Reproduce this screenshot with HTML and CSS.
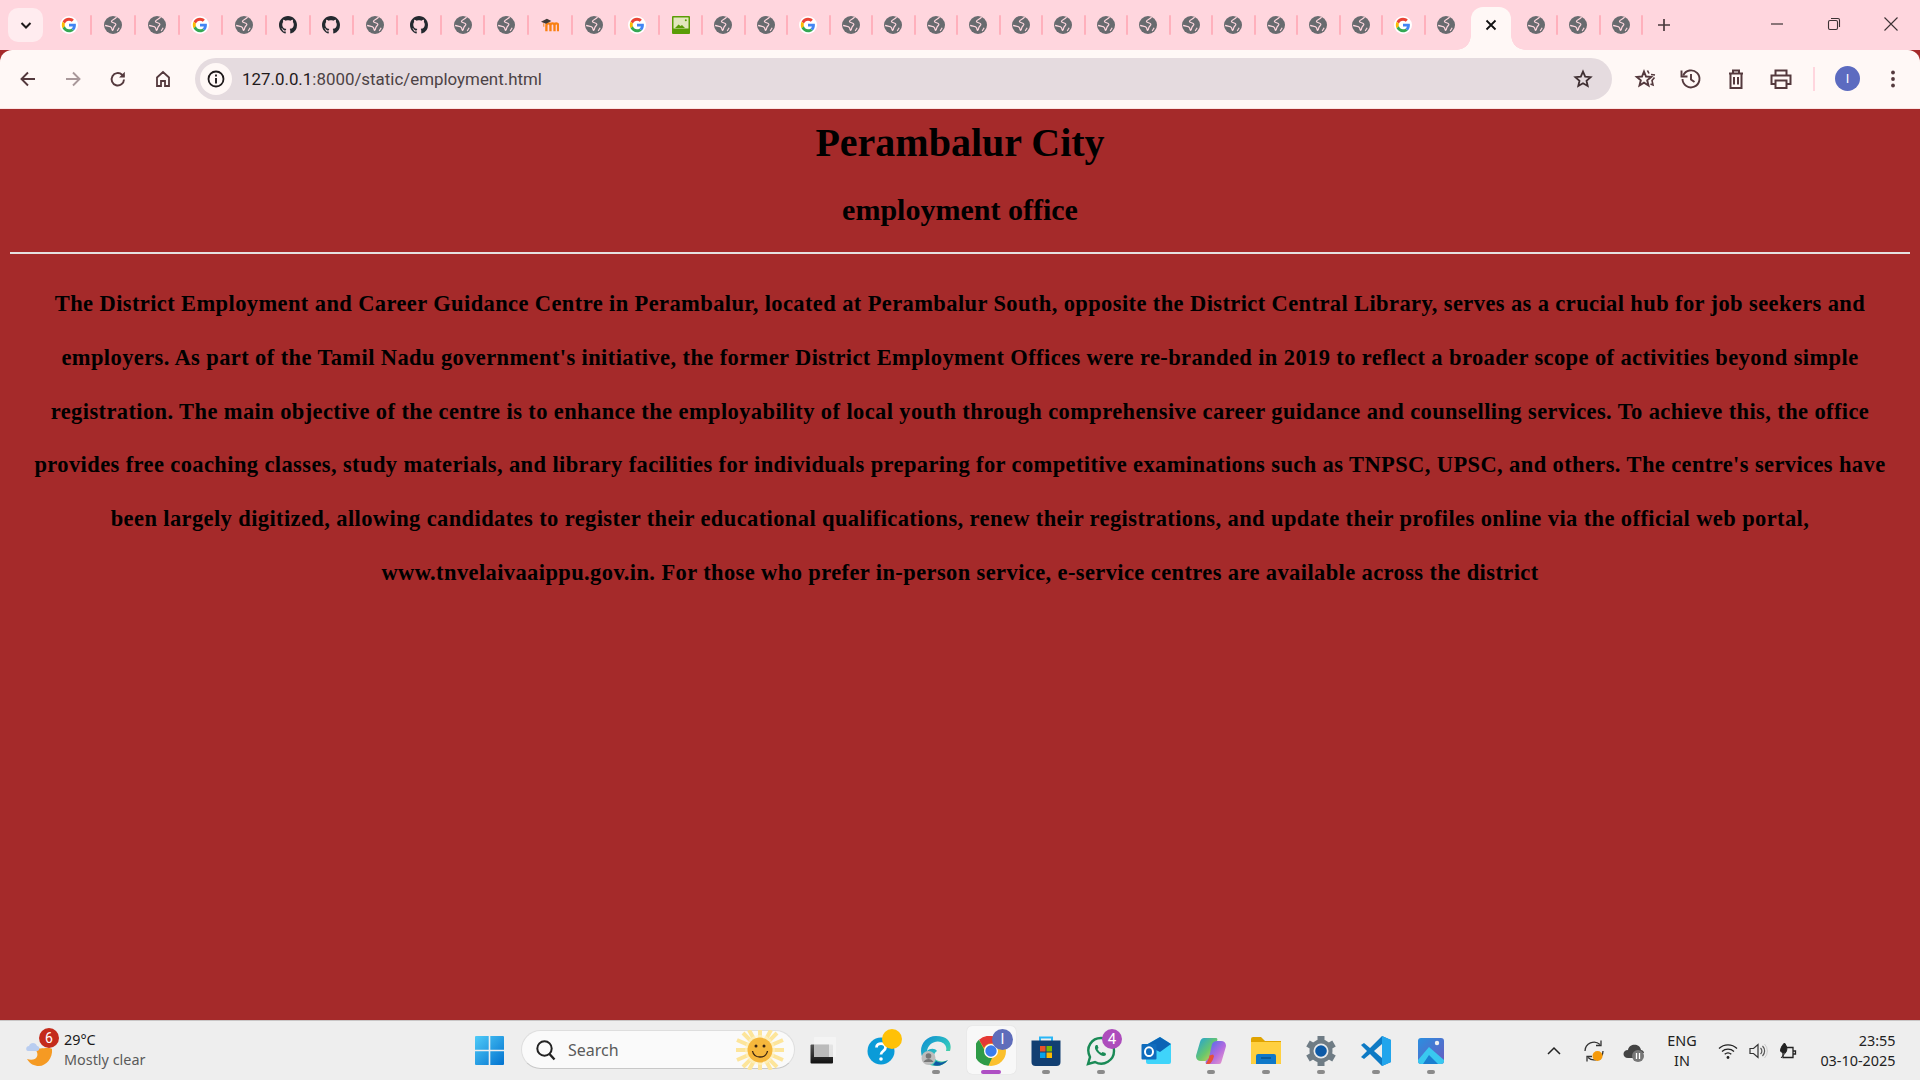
FILE: index.html
```html
<!DOCTYPE html>
<html lang="en">
<head>
<meta charset="utf-8">
<title>employment office</title>
<link rel="stylesheet" href="styles.css">
</head>
<body>
<svg class="defs" aria-hidden="true">
  <symbol id="globe" viewBox="0 0 16 16">
    <circle cx="8" cy="8" r="8" fill="#686b6f"/>
    <path d="M11.2 1C9.500 3.200 6.800 3.200 6.600 4.800c-.1 1.400 3.400 1 3.900 2.400.4 1.100-1.500 1.600-1.800 3.200-.2 1-.4 2.200-1 2.400-.5 0-.6-1.400-1-2.300C6 9 3.500 9.300 1 8.400" fill="none" stroke="#ffd6de" stroke-width="1.100"/>
    <path d="M13.500 10.500l-1.800 2.800" fill="none" stroke="#ffd6de" stroke-width="1"/>
  </symbol>
  <symbol id="google" viewBox="-6 -6 60 60">
    <circle cx="24" cy="24" r="30" fill="#fff"/>
    <path fill="#EA4335" d="M24 9.500c3.540 0 6.710 1.220 9.210 3.600l6.850-6.850C35.900 2.380 30.470 0 24 0 14.620 0 6.510 5.380 2.560 13.220l7.980 6.190C12.430 13.720 17.740 9.500 24 9.500z"/>
    <path fill="#4285F4" d="M46.980 24.550c0-1.570-.15-3.090-.38-4.550H24v9.020h12.940c-.58 2.960-2.260 5.480-4.780 7.180l7.730 6c4.510-4.180 7.090-10.360 7.090-17.650z"/>
    <path fill="#FBBC05" d="M10.530 28.590c-.5-1.450-.78-2.990-.78-4.590s.27-3.140.78-4.590l-7.980-6.190C.92 16.460 0 20.120 0 24c0 3.880.92 7.540 2.560 10.780l7.970-6.190z"/>
    <path fill="#34A853" d="M24 48c6.480 0 11.930-2.130 15.890-5.810l-7.730-6c-2.150 1.450-4.920 2.300-8.160 2.300-6.260 0-11.570-4.220-13.470-9.910l-7.980 6.190C6.510 42.620 14.620 48 24 48z"/>
  </symbol>
  <symbol id="github" viewBox="0 0 16 16">
    <path fill="#24292f" d="M8 0C3.580 0 0 3.580 0 8c0 3.540 2.290 6.530 5.470 7.590.4.07.55-.17.55-.38 0-.19-.01-.82-.01-1.490-2.010.37-2.530-.49-2.690-.94-.09-.23-.48-.94-.82-1.130-.28-.15-.68-.52-.01-.53.63-.01 1.080.58 1.230.82.72 1.210 1.870.87 2.330.66.07-.52.28-.87.51-1.070-1.780-.2-3.640-.89-3.640-3.950 0-.87.31-1.590.82-2.150-.08-.2-.36-1.020.08-2.120 0 0 .67-.21 2.200.82.64-.18 1.320-.27 2-.27s1.360.09 2 .27c1.530-1.040 2.200-.82 2.200-.82.44 1.100.16 1.920.08 2.120.51.56.82 1.270.82 2.150 0 3.070-1.870 3.750-3.650 3.950.29.25.54.73.54 1.480 0 1.070-.01 1.930-.01 2.200 0 .21.15.46.55.38A8.013 8.013 0 0016 8c0-4.420-3.580-8-8-8z"/>
  </symbol>
  <symbol id="moodle" viewBox="0 0 20 18">
    <path d="M6 16V9.500c0-3 4.500-3 4.500 0V16M10.500 9.500c0-3 4.500-3 4.500 0V16M15 9.500c0-3 4-3 4 0V16" fill="none" stroke="#f98012" stroke-width="2.600"/>
    <path d="M0 5.500L6.500 2l5 2.500-6 3z" fill="#3f3a38"/>
    <path d="M3 7v4" stroke="#f3a05a" stroke-width="1.500"/>
  </symbol>
  <symbol id="picture" viewBox="0 0 18 18">
    <rect width="18" height="18" rx="1" fill="#5a9c06"/>
    <rect x="1.500" y="1.500" width="15" height="11" fill="#e3e7bd"/>
    <path d="M3 12l3.500-3.500 2 1.500 1.500-1 3 3z" fill="#5a9c06"/>
    <circle cx="13.800" cy="4.200" r="1" fill="#5a9c06"/>
  </symbol>
</svg>

<header class="tabstrip">
  <button class="tab-menu" aria-label="Search tabs">
    <svg class="i16" viewBox="0 0 16 16"><path d="M3.500 6L8 10.500 12.500 6" fill="none" stroke="#1f1a1b" stroke-width="2"/></svg>
  </button>
  <div class="tabs tabs-wide">
    <span class="tab"><svg class="fav"><use href="#google"/></svg></span>
    <span class="tab"><svg class="fav"><use href="#globe"/></svg></span>
    <span class="tab"><svg class="fav"><use href="#globe"/></svg></span>
    <span class="tab"><svg class="fav"><use href="#google"/></svg></span>
    <span class="tab"><svg class="fav"><use href="#globe"/></svg></span>
    <span class="tab"><svg class="fav"><use href="#github"/></svg></span>
    <span class="tab"><svg class="fav"><use href="#github"/></svg></span>
    <span class="tab"><svg class="fav"><use href="#globe"/></svg></span>
    <span class="tab"><svg class="fav"><use href="#github"/></svg></span>
    <span class="tab"><svg class="fav"><use href="#globe"/></svg></span>
    <span class="tab"><svg class="fav"><use href="#globe"/></svg></span>
    <span class="tab"><svg class="fav"><use href="#moodle"/></svg></span>
    <span class="tab"><svg class="fav"><use href="#globe"/></svg></span>
    <span class="tab"><svg class="fav"><use href="#google"/></svg></span>
  </div>
  <div class="tabs tabs-narrow">
    <span class="tab"><svg class="fav"><use href="#picture"/></svg></span>
    <span class="tab"><svg class="fav"><use href="#globe"/></svg></span>
    <span class="tab"><svg class="fav"><use href="#globe"/></svg></span>
    <span class="tab"><svg class="fav"><use href="#google"/></svg></span>
    <span class="tab"><svg class="fav"><use href="#globe"/></svg></span>
    <span class="tab"><svg class="fav"><use href="#globe"/></svg></span>
    <span class="tab"><svg class="fav"><use href="#globe"/></svg></span>
    <span class="tab"><svg class="fav"><use href="#globe"/></svg></span>
    <span class="tab"><svg class="fav"><use href="#globe"/></svg></span>
    <span class="tab"><svg class="fav"><use href="#globe"/></svg></span>
    <span class="tab"><svg class="fav"><use href="#globe"/></svg></span>
    <span class="tab"><svg class="fav"><use href="#globe"/></svg></span>
    <span class="tab"><svg class="fav"><use href="#globe"/></svg></span>
    <span class="tab"><svg class="fav"><use href="#globe"/></svg></span>
    <span class="tab"><svg class="fav"><use href="#globe"/></svg></span>
    <span class="tab"><svg class="fav"><use href="#globe"/></svg></span>
    <span class="tab"><svg class="fav"><use href="#globe"/></svg></span>
    <span class="tab"><svg class="fav"><use href="#google"/></svg></span>
    <span class="tab tab-plain"><svg class="fav"><use href="#globe"/></svg></span>
  </div>
  <div class="tab-active">
    <svg class="i16" viewBox="0 0 16 16"><path d="M3.500 3.500l9 9M12.500 3.500l-9 9" fill="none" stroke="#111" stroke-width="1.800"/></svg>
  </div>
  <div class="tabs tabs-narrow">
    <span class="tab"><svg class="fav"><use href="#globe"/></svg></span>
    <span class="tab"><svg class="fav"><use href="#globe"/></svg></span>
    <span class="tab"><svg class="fav"><use href="#globe"/></svg></span>
  </div>
  <button class="tab-new" aria-label="New tab">
    <svg class="i16" viewBox="0 0 16 16"><path d="M8 2v12M2 8h12" fill="none" stroke="#4a3a3d" stroke-width="1.700"/></svg>
  </button>
  <div class="window-controls">
    <span class="win-btn"><svg class="i16" viewBox="0 0 16 16"><path d="M2 8h12" stroke="#3c3234" stroke-width="1.200"/></svg></span>
    <span class="win-btn"><svg class="i16" viewBox="0 0 16 16"><rect x="2.500" y="4.500" width="9" height="9" rx="1.500" fill="none" stroke="#3c3234" stroke-width="1.100"/><path d="M5 2.500h7c1 0 1.500.5 1.500 1.500v7" fill="none" stroke="#3c3234" stroke-width="1.100"/></svg></span>
    <span class="win-btn"><svg class="i16" viewBox="0 0 16 16"><path d="M1.500 1.500l13 13M14.500 1.500l-13 13" stroke="#3c3234" stroke-width="1.100"/></svg></span>
  </div>
</header>

<nav class="toolbar">
  <span class="tool"><svg class="i20" viewBox="0 0 20 20"><path d="M17 10H4M10 3.500L3.500 10l6.500 6.500" fill="none" stroke="#54393d" stroke-width="1.900"/></svg></span>
  <span class="tool"><svg class="i20" viewBox="0 0 20 20"><path d="M3 10h13M10 3.500l6.500 6.500-6.500 6.500" fill="none" stroke="#a9989a" stroke-width="1.900"/></svg></span>
  <span class="tool"><svg class="i20" viewBox="0 0 20 20"><path d="M16 10.500a6.200 6.200 0 1 1-1.900-4.700L16 7.500" fill="none" stroke="#54393d" stroke-width="1.900"/><path d="M16.800 2.800v5.700h-5.700z" fill="#54393d"/></svg></span>
  <span class="tool"><svg class="i20" viewBox="0 0 20 20"><path d="M4 17V8.500L10 3l6 5.500V17h-4v-5H8v5z" fill="none" stroke="#54393d" stroke-width="1.800"/></svg></span>
  <div class="omnibox">
    <span class="site-info"><svg class="i20" viewBox="0 0 20 20"><circle cx="10" cy="10" r="7.500" fill="none" stroke="#1f1a1b" stroke-width="1.800"/><path d="M10 9v5.500M10 5.500v2" stroke="#1f1a1b" stroke-width="1.900"/></svg></span>
    <span class="url"><span class="url-host">127.0.0.1</span>:8000/static/employment.html</span>
    <span class="omni-star"><svg class="i20" viewBox="0 0 20 20"><path d="M10 2.600l2.200 5 5.400.5-4.100 3.600 1.200 5.300L10 14.200 5.300 17l1.200-5.300L2.400 8.100l5.400-.5z" fill="none" stroke="#3f2f32" stroke-width="1.800"/></svg></span>
  </div>
  <div class="tool-group">
    <span class="tool"><svg class="i24" viewBox="0 0 24 24"><path d="M10 4.500l2 5 5.200.4-4 3.400 1.300 5.200L10 15.700l-4.500 2.800 1.300-5.200-4-3.400L8 9.500z" fill="none" stroke="#54393d" stroke-width="1.900"/><path d="M13.500 3.500l1.500 3M17 7.500l4 .5M20.500 10.500l-2.500 3 1 4.500-2.500-1" fill="none" stroke="#54393d" stroke-width="1.600"/></svg></span>
    <span class="tool"><svg class="i24" viewBox="0 0 24 24"><path d="M4.200 8.500A8.500 8.500 0 1 1 3.500 12" fill="none" stroke="#54393d" stroke-width="1.900"/><path d="M2.500 3.500v6h6" fill="none" stroke="#54393d" stroke-width="1.900"/><path d="M12 7v5.500l3.500 2.500" fill="none" stroke="#54393d" stroke-width="1.900"/></svg></span>
    <span class="tool"><svg class="i24" viewBox="0 0 24 24"><path d="M5 6.500h14M9 6V3.500h6V6M6.500 6.500v14.500h11V6.500M10 10v7.500M14 10v7.500" fill="none" stroke="#54393d" stroke-width="2"/></svg></span>
    <span class="tool"><svg class="i24" viewBox="0 0 24 24"><path d="M6.500 8V3.500h11V8M6.500 17H2.500V8.500h19V17h-4M6.500 13.500h11V21h-11z" fill="none" stroke="#54393d" stroke-width="2"/></svg></span>
  </div>
  <span class="tool-divider"></span>
  <span class="tool"><span class="avatar">I</span></span>
  <span class="tool"><svg class="i20" viewBox="0 0 20 20"><circle cx="10" cy="3.500" r="1.900" fill="#54393d"/><circle cx="10" cy="10" r="1.900" fill="#54393d"/><circle cx="10" cy="16.500" r="1.900" fill="#54393d"/></svg></span>
</nav>

<main class="page">
  <h1 class="title">Perambalur City</h1>
  <h2 class="subtitle">employment office</h2>
  <hr class="rule">
  <p class="intro">The District Employment and Career Guidance Centre in Perambalur, located at Perambalur South, opposite the District Central Library, serves as a crucial hub for job seekers and employers. As part of the Tamil Nadu government's initiative, the former District Employment Offices were re-branded in 2019 to reflect a broader scope of activities beyond simple registration. The main objective of the centre is to enhance the employability of local youth through comprehensive career guidance and counselling services. To achieve this, the office provides free coaching classes, study materials, and library facilities for individuals preparing for competitive examinations such as TNPSC, UPSC, and others. The centre's services have been largely digitized, allowing candidates to register their educational qualifications, renew their registrations, and update their profiles online via the official web portal, www.tnvelaivaaippu.gov.in. For those who prefer in-person service, e-service centres are available across the district</p>
</main>

<footer class="taskbar">
  <div class="weather">
    <span class="weather-icon">
      <svg class="i30" viewBox="0 0 30 30">
        <path d="M10 12c3 0 15-2 17 0 1 9-6 17-13 17-5 0-9-2-12-7 8 3 14-3 8-10z" fill="#f59a23"/>
        <path d="M3 14c-2.500 0-2.500-5 1-5 1-4 7-4 8 0 3 0 3 5 0 5z" fill="#b9cdf0"/>
      </svg>
      <span class="badge badge-red">6</span>
    </span>
    <span class="weather-text"><span class="temp">29°C</span><span class="cond">Mostly clear</span></span>
  </div>
  <svg class="start" viewBox="0 0 29 29">
    <defs><linearGradient id="winblue" x1="0" y1="0" x2="1" y2="1"><stop offset="0" stop-color="#4fcbf8"/><stop offset="1" stop-color="#0272cf"/></linearGradient></defs>
    <path fill="url(#winblue)" d="M0 1a1 1 0 0 1 1-1h12.700v13.700H0zM15.300 0H28a1 1 0 0 1 1 1v12.700H15.300zM0 15.300h13.700V29H1a1 1 0 0 1-1-1zM15.300 15.300H29V28a1 1 0 0 1-1 1H15.300z"/>
  </svg>
  <div class="search">
    <svg class="i24" viewBox="0 0 24 24"><circle cx="10.500" cy="10.500" r="7.200" fill="none" stroke="#222" stroke-width="2"/><path d="M15.500 16l5 5.500" stroke="#222" stroke-width="2.400"/></svg>
    <span class="search-label">Search</span>
    <svg class="sun" viewBox="0 0 48 40">
      <g stroke="#fde59a" stroke-width="4"><path d="M24 0v40M0 20h48M7 3l34 34M41 3L7 37M13 0l22 40M35 0L13 40M1 10l46 20M47 10L1 30"/></g>
      <circle cx="24" cy="20" r="15" fill="#fff3c8" opacity=".6"/>
      <circle cx="24" cy="20" r="12.500" fill="#f6b73c"/>
      <circle cx="20" cy="16" r="1.500" fill="#3a2410"/><circle cx="28" cy="16" r="1.500" fill="#3a2410"/>
      <path d="M16.500 21c1.500 8 13.500 8 15 0" fill="none" stroke="#3a2410" stroke-width="1.300"/>
    </svg>
  </div>
  <div class="app app-first">
    <svg class="i30" viewBox="0 0 30 30"><defs><linearGradient id="tv" x1="0" y1="0" x2="0" y2="1"><stop offset="0" stop-color="#555"/><stop offset="1" stop-color="#111"/></linearGradient></defs><rect x="3.500" y="8.500" width="22.500" height="19" rx="1" fill="url(#tv)"/><rect x="11" y="1" width="22" height="20" rx="1" fill="#f4f4f4" opacity=".9" transform="translate(-4 0)"/><rect x="7" y="8.500" width="15" height="12.500" fill="#bbb"/></svg>
  </div>
  <div class="app">
    <svg class="i30" viewBox="0 0 30 30"><circle cx="15" cy="15" r="13.500" fill="#0a9bd8"/><path d="M10.500 11.500c0-5.500 9.500-5 9 0 0 3.500-4.500 3.500-4.500 7" fill="none" stroke="#fff" stroke-width="2.800"/><circle cx="15" cy="23" r="1.800" fill="#fff"/></svg>
    <span class="dot-note"></span>
  </div>
  <div class="app">
    <svg class="i30" viewBox="0 0 30 30"><defs><linearGradient id="edge" x1="0" y1="0" x2="1" y2="1"><stop offset="0" stop-color="#0c8ad4"/><stop offset=".6" stop-color="#2fc4c0"/><stop offset="1" stop-color="#7ce06a"/></linearGradient></defs><path d="M15 0C6 0 0 7 0 15c0 9 7 15 15 15 5 0 9-2 12-6-6 3-14 1-14-4 0-2 1-4 3-5-2-3-7-3-10 0 1-7 8-11 14-9 5 2 6 6 5 9h4c2-6 0-15-14-15z" fill="url(#edge)"/><path d="M12 29c5 2 11 0 15-5-5 3-9 3-12 1z" fill="#0c59a4"/><circle cx="7.500" cy="22" r="7" fill="#bdbdbd"/><circle cx="7.500" cy="20" r="2.800" fill="#777"/><path d="M2.500 26c2-4 8-4 10 0z" fill="#777"/></svg>
    <span class="indicator"></span>
  </div>
  <div class="app app-active">
    <svg class="i30" viewBox="0 0 30 30"><circle cx="15" cy="15" r="15" fill="#fbc02d"/><path d="M15 0a15 15 0 0 1 13 7.500H15A7.500 7.500 0 0 0 8 12L3 3.800A15 15 0 0 1 15 0z" fill="#e53935"/><path d="M2.900 3.800L9 15a6 6 0 0 0 7 7l-3.500 7.800A15 15 0 0 1 2.900 3.800z" fill="#2e9b47"/><circle cx="15" cy="15" r="7" fill="#fff"/><circle cx="15" cy="15" r="5.700" fill="#3b7ded"/></svg>
    <span class="badge badge-profile">I</span>
    <span class="indicator indicator-active"></span>
  </div>
  <div class="app">
    <svg class="i30" viewBox="0 0 30 30"><path d="M9 5V1.500h12V5" fill="none" stroke="#29b6f6" stroke-width="2"/><path d="M0.500 4.500h29V26a4 4 0 0 1-4 4h-21a4 4 0 0 1-4-4z" fill="#123f72"/><rect x="9" y="10" width="5.500" height="5.500" fill="#e8522a"/><rect x="15.500" y="10" width="5.500" height="5.500" fill="#7db700"/><rect x="9" y="16.500" width="5.500" height="5.500" fill="#08a2e8"/><rect x="15.500" y="16.500" width="5.500" height="5.500" fill="#fdb900"/></svg>
    <span class="indicator"></span>
  </div>
  <div class="app">
    <svg class="i30" viewBox="0 0 30 30"><path d="M2 28l2-7C-1 11 6 2 15 2c8 0 13 6 13 13 0 9-10 16-19 11z" fill="none" stroke="#1a8a56" stroke-width="2.400"/><path d="M10 9c-2 2-1 5 2 8s6 4 8 2l-.5-2-3-1-1 1c-2-1-3-2-4-4l1-1-1-3z" fill="#1a8a56"/></svg>
    <span class="badge badge-purple">4</span>
    <span class="indicator"></span>
  </div>
  <div class="app">
    <svg class="i30" viewBox="0 0 30 30"><path d="M5 9L19 1l11 7v18a2 2 0 0 1-2 2H7a2 2 0 0 1-2-2z" fill="#3fd4fa"/><path d="M5 9L19 1l11 7-11 8z" fill="#0b63b5"/><rect x="0.500" y="8" width="15" height="15.500" rx="1" fill="#0f6cbd"/><ellipse cx="8" cy="15.700" rx="4" ry="4.400" fill="none" stroke="#fff" stroke-width="2"/></svg>
  </div>
  <div class="app">
    <svg class="i30" viewBox="0 0 30 30"><defs><linearGradient id="cp1" x1="0" y1="0" x2="1" y2="1"><stop offset="0" stop-color="#1c9fe0"/><stop offset=".55" stop-color="#6ac76b"/><stop offset="1" stop-color="#f9c84a"/></linearGradient><linearGradient id="cp2" x1="0" y1="0" x2="1" y2="1"><stop offset="0" stop-color="#3b6ded"/><stop offset=".55" stop-color="#b06ae0"/><stop offset="1" stop-color="#f4a0c8"/></linearGradient></defs><path d="M8 2h12c1 0 2 1 1 3l-3 3-4 14c-1 2-3 3-5 3H5c-4 0-6-3-4.500-7L4 6c1-3 2-4 4-4z" fill="url(#cp1)"/><path d="M23 28H11c-1 0-2-1-1-3l3-3 3-14c1-2 3-3 5-3h4c4 0 6 3 4.500 7L26 24c-1 3-1 4-3 4z" fill="url(#cp2)"/><path d="M11 28c3 .5 5-1 7-8l-1-1.500-3.500 1c-.5 3-1.500 5-3.500 8.500z" fill="#e8503a"/></svg>
    <span class="indicator"></span>
  </div>
  <div class="app">
    <svg class="i30" viewBox="0 0 30 30"><path d="M0 3a2 2 0 0 1 2-2h8l4 4h16v22a1 1 0 0 1-1 1H1a1 1 0 0 1-1-1z" fill="#e0a300"/><path d="M0 6h30v21a1 1 0 0 1-1 1H1a1 1 0 0 1-1-1z" fill="#ffd040"/><path d="M5 20a2 2 0 0 1 2-2h16a2 2 0 0 1 2 2v8H5z" fill="#0f78c8"/><path d="M10 22h10" stroke="#0a4f86" stroke-width="1.400"/></svg>
    <span class="indicator"></span>
  </div>
  <div class="app">
    <svg class="i30" viewBox="0 0 30 30"><path d="M15 15L15 0M15 15L28 7.500M15 15L28 22.500M15 15V30M15 15L2 22.500M15 15L2 7.500" stroke="#6f7c85" stroke-width="7"/><circle cx="15" cy="15" r="11.500" fill="#6f7c85"/><circle cx="15" cy="15" r="7.500" fill="#e8eaec"/><circle cx="15" cy="15" r="5.800" fill="#0d5aa7"/></svg>
    <span class="indicator"></span>
  </div>
  <div class="app">
    <svg class="i30" viewBox="0 0 30 30"><path d="M21 0l9 4v22l-9 4-12-12-6 5-3-2 6-6-6-6 3-2 6 5z" fill="#0e7ac4"/><path d="M21 0l9 4v22l-9 4z" fill="#22a5ec"/><path d="M21 8l-8 7 8 7z" fill="#eeeeee"/></svg>
    <span class="indicator"></span>
  </div>
  <div class="app">
    <svg class="i26" viewBox="0 0 26 26"><defs><linearGradient id="ph" x1="0" y1="0" x2="1" y2="1"><stop offset="0" stop-color="#2a8fe0"/><stop offset="1" stop-color="#6a5bc0"/></linearGradient></defs><rect width="26" height="26" rx="3" fill="url(#ph)"/><circle cx="19" cy="5" r="2.200" fill="#f0f0f0"/><path d="M0 22L11 9l15 13v1a3 3 0 0 1-3 3H3a3 3 0 0 1-3-3z" fill="#39c8f0"/><path d="M5 26l6-9 9 9z" fill="#1b7fd0"/></svg>
    <span class="indicator"></span>
  </div>
  <div class="tray">
    <span class="tray-cell"><svg class="i16" viewBox="0 0 16 16"><path d="M2 11l6-6 6 6" fill="none" stroke="#222" stroke-width="1.500"/></svg></span>
    <span class="tray-cell"><svg class="i24" viewBox="0 0 24 24"><path d="M3 12a9 9 0 0 1 15-6.500M21 12a9 9 0 0 1-15 6.500" fill="none" stroke="#333" stroke-width="1.300"/><path d="M19 1.500v5h-5M5 22.500v-5h5" fill="none" stroke="#333" stroke-width="1.300"/><circle cx="15.500" cy="17" r="5" fill="#f59a0a"/></svg></span>
    <span class="tray-cell"><svg class="i24" viewBox="0 0 24 24"><path d="M6 19c-6 0-6-8 0-8 1-7 12-7 13 0 1 0 3 1 3 3H14v5z" fill="#444"/><circle cx="16" cy="17" r="6" fill="#777"/><path d="M14.500 14v6M17.500 14v6" stroke="#fff" stroke-width="1.300"/></svg></span>
    <span class="tray-lang"><span>ENG</span><span>IN</span></span>
    <span class="tray-cell tray-sm"><svg class="i20" viewBox="0 0 20 20"><path d="M1 7.500a13 13 0 0 1 18 0M4 10.500a9 9 0 0 1 12 0M6.700 13.300a5 5 0 0 1 6.600 0" fill="none" stroke="#222" stroke-width="1.300"/><circle cx="10" cy="16.500" r="1.400" fill="#222"/></svg></span>
    <span class="tray-cell tray-sm"><svg class="i20" viewBox="0 0 20 20"><path d="M2 7.500h3.500L10 3.500v13l-4.500-4H2z" fill="none" stroke="#333" stroke-width="1.200"/><path d="M12.500 7a4 4 0 0 1 0 6M14.500 5a7 7 0 0 1 0 10" fill="none" stroke="#555" stroke-width="1.200"/><path d="M16.500 3a10 10 0 0 1 0 14" fill="none" stroke="#ccc" stroke-width="1"/></svg></span>
    <span class="tray-cell tray-sm"><svg class="i20" viewBox="0 0 20 20"><path d="M5 6.500h10v10H5zM15 10h2.500v3H15" fill="none" stroke="#222" stroke-width="1.300"/><path d="M2.500 10c0-4 3-7 4-8 2 3 3 5 2 8-.5 2-4 3-6 0zM3 17l5-6" fill="#222" stroke="#222" stroke-width="1"/></svg></span>
    <span class="clock"><span>23:55</span><span>03-10-2025</span></span>
  </div>
</footer>
</body>
</html>
```
FILE: styles.css
```css
* { box-sizing: border-box; }
html, body { margin: 0; padding: 0; }
body {
  width: 1920px;
  height: 1080px;
  overflow: hidden;
  display: flex;
  flex-direction: column;
  background: #a52a2a;
}
button { border: 0; padding: 0; background: none; }
svg { display: block; flex: none; }
.defs { width: 0; height: 0; position: absolute; }
.i16 { width: 16px; height: 16px; }
.i20 { width: 20px; height: 20px; }
.i24 { width: 24px; height: 24px; }
.i26 { width: 26px; height: 26px; }
.i30 { width: 30px; height: 30px; }

/* tab strip */
.tabstrip {
  height: 50px;
  flex: none;
  display: flex;
  align-items: flex-start;
  padding-left: 8px;
  background: #ffd6de;
}
.tab-menu {
  width: 35px;
  height: 34px;
  margin-top: 8px;
  margin-right: 4.5px;
  border-radius: 10px;
  background: #ffecef;
  display: flex;
  align-items: center;
  justify-content: center;
}
.tabs { display: flex; flex: none; height: 50px; }
.tabs-wide { margin-right: 0.6px; }
.tab {
  position: relative;
  height: 50px;
  display: flex;
  align-items: center;
  justify-content: center;
  padding-bottom: 1px;
}
.tabs-wide .tab { width: 43.7px; }
.tabs-narrow .tab { width: 42.5px; }
.tab::after {
  content: "";
  position: absolute;
  right: -1px;
  top: 15px;
  width: 2px;
  height: 20px;
  border-radius: 1px;
  background: #ffb0bc;
}
.tab-plain::after { display: none; }
.fav { width: 18px; height: 18px; }
.tab-active {
  position: relative;
  flex: none;
  width: 40px;
  height: 43px;
  margin: 7px 3.5px 0 4px;
  border-radius: 12px 12px 0 0;
  background: #fff8f6;
  display: flex;
  align-items: center;
  justify-content: center;
  padding-bottom: 7px;
}
.tab-active::before,
.tab-active::after {
  content: "";
  position: absolute;
  bottom: 0;
  width: 14px;
  height: 14px;
}
.tab-active::before {
  left: -14px;
  background: radial-gradient(circle at 0 0, transparent 13.500px, #fff8f6 14px);
}
.tab-active::after {
  right: -14px;
  background: radial-gradient(circle at 100% 0, transparent 13.500px, #fff8f6 14px);
}
.tab-new {
  width: 43px;
  height: 34px;
  margin-top: 8px;
  display: flex;
  align-items: center;
  justify-content: center;
}
.window-controls { margin-left: auto; display: flex; margin-right: 1px; }
.win-btn {
  width: 57px;
  height: 48px;
  display: flex;
  align-items: center;
  justify-content: center;
}

/* toolbar */
.toolbar {
  height: 59px;
  flex: none;
  display: flex;
  align-items: center;
  padding: 0 0 1px 5.500px;
  background: #fff8f6;
  border-bottom: 1px solid #fbe3e3;
  border-radius: 12px 12px 0 0;
}
.tool {
  width: 45px;
  height: 45px;
  flex: none;
  display: flex;
  align-items: center;
  justify-content: center;
}
.tool-group { display: flex; margin-left: 11px; }
.tool-divider { width: 2px; height: 24px; margin: 0 10px; background: #ffd6de; }
.avatar {
  width: 25px;
  height: 25px;
  border-radius: 50%;
  background: #5c6bc0;
  color: #fff;
  font: 13px/25px Roboto, sans-serif;
  text-align: center;
}
.omnibox {
  width: 1417px;
  height: 42px;
  margin-left: 9.500px;
  padding: 0 14px 0 5px;
  border-radius: 21px;
  background: #e5dbdf;
  display: flex;
  align-items: center;
  flex: none;
}
.site-info {
  width: 32px;
  height: 32px;
  border-radius: 50%;
  background: #fff8f6;
  display: flex;
  align-items: center;
  justify-content: center;
  flex: none;
}
.url {
  margin-left: 10px;
  font: 16.900px/44px Roboto, sans-serif;
  color: #4c4245;
  white-space: nowrap;
}
.url-host { color: #1f1a1b; }
.omni-star { margin-left: auto; width: 30px; display: flex; justify-content: center; }

/* page */
.page { flex: 1; min-height: 0; padding: 11px 10px 10px; color: #000; font-family: "Liberation Serif", "Times New Roman", serif; }
.title { margin: 0 0 25.800px; font-size: 40px; font-weight: 700; line-height: 46px; text-align: center; }
.subtitle { margin: 0 0 24.900px; font-size: 30px; font-weight: 700; line-height: 35px; text-align: center; }
.rule { margin: 0; height: 2px; border: 0; background: #e6e0e0; }
.intro { margin: 23.500px 0 0; font-size: 22.500px; font-weight: 700; letter-spacing: .39px; line-height: 53.700px; text-align: center; }

/* taskbar */
.taskbar {
  height: 60px;
  flex: none;
  display: flex;
  align-items: flex-start;
  padding-left: 25px;
  background: #eeeeee;
  border-top: 1px solid #c9c6c6;
  font-family: "Noto Sans", sans-serif;
}
.weather { width: 450px; height: 59px; display: flex; align-items: center; flex: none; }
.weather-icon { position: relative; width: 39px; height: 30px; margin-top: 2px; }
.weather-text { display: flex; flex-direction: column; font-size: 14.400px; line-height: 20px; margin-top: -1px; }
.temp { color: #1a1a1a; }
.cond { color: #5a5a5a; }
.badge {
  position: absolute;
  width: 20px;
  height: 20px;
  border-radius: 50%;
  color: #fff;
  font-family: Roboto, sans-serif;
  font-size: 14px;
  line-height: 20px;
  text-align: center;
}
.badge-red { left: 14px; top: -9px; background: #c42b1c; }
.badge-profile { left: 25.500px; top: 2.500px; background: #5f6dbb; width: 21px; height: 21px; line-height: 21px; }
.badge-purple { left: 28.500px; top: 3px; background: #ad4cbc; font-size: 15px; }
.start { width: 29px; height: 29px; margin-top: 15px; flex: none; }
.search {
  width: 274px;
  height: 39px;
  margin: 9px 0 0 17px;
  padding: 0 5px 0 12px;
  flex: none;
  display: flex;
  align-items: center;
  border-radius: 20px;
  background: #fafafa;
  border: 1px solid #dedede;
  border-bottom-color: #c8c8c8;
}
.search-label { margin-left: 10px; font-size: 16px; color: #5a5a5a; }
.sun { width: 48px; height: 40px; margin-left: auto; margin-right: 5px; }
.app {
  position: relative;
  width: 55px;
  height: 48px;
  margin-top: 5px;
  padding-top: 10px;
  flex: none;
  display: flex;
  flex-direction: column;
  align-items: center;
  border-radius: 5px;
}
.app > svg { height: 30px; }
.app-first { margin-left: -0.500px; margin-right: 4px; }
.app-active { width: 49px; margin-left: 3px; margin-right: 3px; background: #f8f8f8; box-shadow: 0 0 1px #ccc; }
.indicator {
  position: absolute;
  bottom: 0;
  width: 8px;
  height: 4px;
  border-radius: 2px;
  background: #8a8a8a;
}
.indicator-active { width: 20px; background: #ae4fc4; }
.dot-note {
  position: absolute;
  left: 28px;
  top: 3px;
  width: 20px;
  height: 20px;
  border-radius: 50%;
  background: #ffc107;
}
.tray { margin-left: auto; display: flex; align-items: center; height: 59px; padding-right: 24.500px; }
.tray-cell { width: 40px; display: flex; justify-content: center; flex: none; }
.tray-sm { width: 30px; }
.tray-lang {
  width: 52px;
  margin: 0 5px 0 2px;
  display: flex;
  flex-direction: column;
  align-items: center;
  font-size: 14.400px;
  line-height: 20px;
  color: #222;
}
.clock {
  width: 92.500px;
  display: flex;
  flex-direction: column;
  align-items: flex-end;
  font-size: 14.400px;
  line-height: 20px;
  color: #222;
}
```
